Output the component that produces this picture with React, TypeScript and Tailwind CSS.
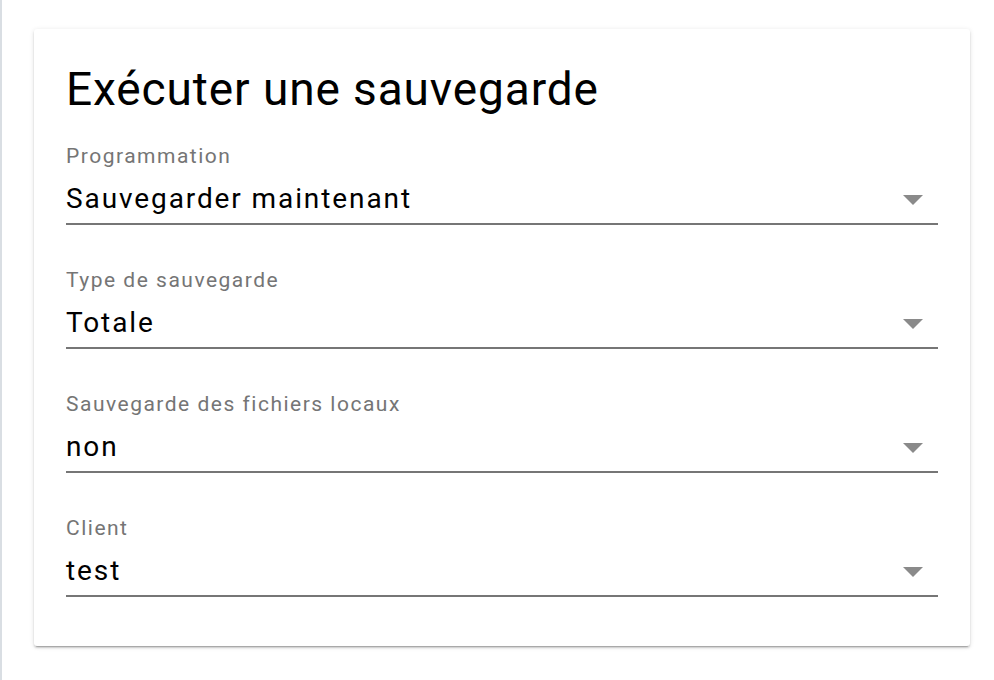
import React from 'react';

const fields = [
  { label: 'Programmation', value: 'Sauvegarder maintenant' },
  { label: 'Type de sauvegarde', value: 'Totale' },
  { label: 'Sauvegarde des fichiers locaux', value: 'non' },
  { label: 'Client', value: 'test' },
];

function SelectField({ label, value }: { label: string; value: string }) {
  return (
    <div className="flex flex-col">
      <div className="h-6 text-[21px] leading-6 tracking-[1.5px] text-[#757575]">{label}</div>
      <div className="mt-[13px] flex h-9 items-center justify-between">
        <span className="text-[28px] leading-9 tracking-[1.9px] text-black">{value}</span>
        <span className="mr-[15px] mt-[2px] h-0 w-0 border-x-[10px] border-t-[10px] border-x-transparent border-t-[#8a8a8a]" />
      </div>
      <div className="mt-[6px] h-[2px] bg-[#767676]" />
    </div>
  );
}

export default function App() {
  return (
    <div className="flex min-h-[680px] bg-white font-['Roboto',sans-serif]">
      <div className="w-[2px] shrink-0 bg-[#d9dee3]" />
      <div className="pl-[32px] pt-[29px]">
        <div className="w-[936px] rounded-[3px] bg-white px-8 pb-[49px] pt-[33px] shadow-[0_2px_2px_rgba(0,0,0,0.14),0_3px_1px_-2px_rgba(0,0,0,0.2),0_1px_5px_rgba(0,0,0,0.12)]">
          <h1 className="h-[54px] text-[46px] leading-[54px] tracking-[0.9px] text-black">Exécuter une sauvegarde</h1>
          <div className="mt-[28px] flex flex-col gap-[43px]">
            {fields.map((f) => (
              <SelectField key={f.label} label={f.label} value={f.value} />
            ))}
          </div>
        </div>
      </div>
    </div>
  );
}
